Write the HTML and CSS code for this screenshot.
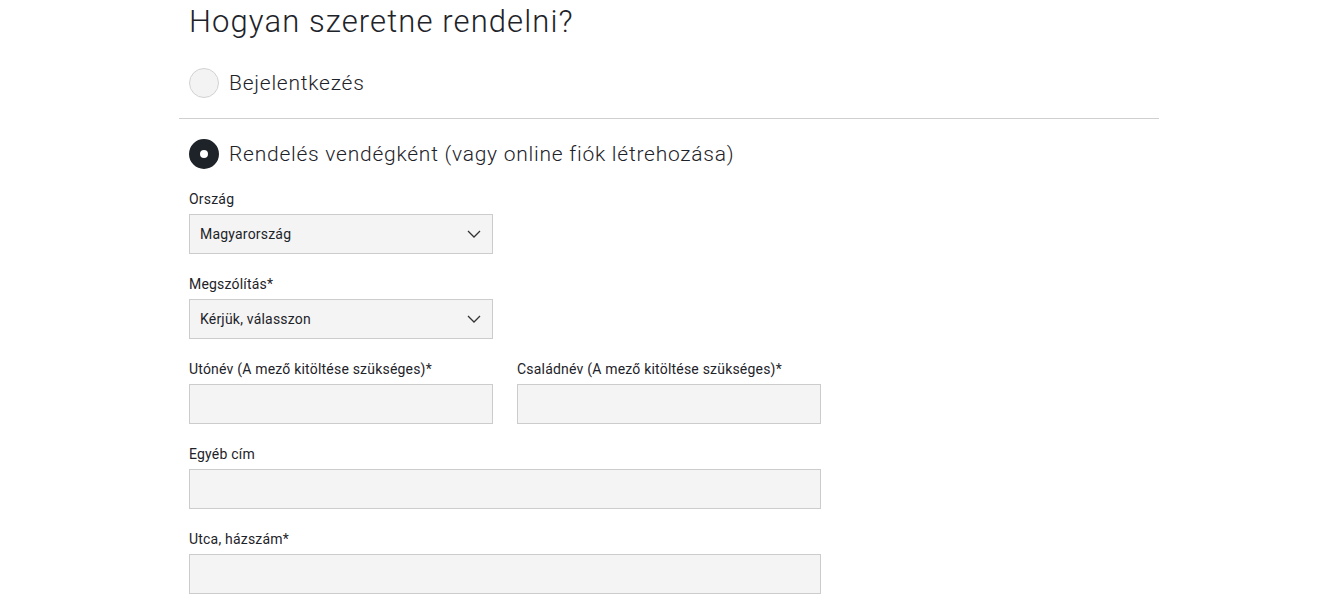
FILE: index.html
```html
<!DOCTYPE html>
<html lang="hu">
<head>
  <meta charset="UTF-8">
  <title>Hogyan szeretne rendelni?</title>
  <link rel="stylesheet" href="styles.css">
</head>

<body>

  <div class="checkout">
    <h1>Hogyan szeretne rendelni?</h1>

    <div class="option">
      <label class="choice"><span class="radio"></span> Bejelentkezés</label>
    </div>

    <div class="option active">
      <label class="choice"><span class="radio checked"></span> Rendelés vendégként (vagy online fiók létrehozása)</label>

      <form class="guest-form">
        <div class="field">
          <label>Ország</label>
          <div class="select">
            <span>Magyarország</span>
            <svg width="14" height="8" viewBox="0 0 14 8"><path d="M1 1l6 6 6-6" fill="none" stroke="#333" stroke-width="1.3"/></svg>
          </div>
        </div>

        <div class="field">
          <label>Megszólítás*</label>
          <div class="select">
            <span>Kérjük, válasszon</span>
            <svg width="14" height="8" viewBox="0 0 14 8"><path d="M1 1l6 6 6-6" fill="none" stroke="#333" stroke-width="1.3"/></svg>
          </div>
        </div>

        <div class="row">
          <div class="field">
            <label>Utónév (A mező kitöltése szükséges)*</label>
            <input type="text">
          </div>
          <div class="field">
            <label>Családnév (A mező kitöltése szükséges)*</label>
            <input type="text">
          </div>
        </div>

        <div class="field wide">
          <label>Egyéb cím</label>
          <input type="text">
        </div>

        <div class="field wide">
          <label>Utca, házszám*</label>
          <input type="text">
        </div>
      </form>
    </div>
  </div>

</body>
</html>
```

FILE: styles.css
```css
* {
  margin: 0;
  padding: 0;
  box-sizing: border-box;
}

body {
  font-family: Roboto, 'Liberation Sans', sans-serif;
  color: #1d2329;
  background: #fff;
}

.checkout {
  width: 980px;
  margin-left: 179px;
}

h1 {
  font-weight: 300;
  font-size: 31px;
  line-height: 44px;
  padding: 0 10px;
  letter-spacing: 1.1px;
}

.option {
  padding: 0 10px;
}

.option:first-of-type {
  padding-top: 24px;
  padding-bottom: 20px;
  border-bottom: 1px solid #cfcfcf;
}

.active {
  padding-top: 20px;
}

.choice {
  display: flex;
  align-items: center;
  gap: 10px;
  font-size: 21px;
  font-weight: 300;
  letter-spacing: 0.75px;
  height: 30px;
  cursor: pointer;
}

.radio {
  width: 30px;
  height: 30px;
  border-radius: 50%;
  background: #f3f3f3;
  border: 1px solid #d2d2d2;
  flex-shrink: 0;
}

.radio.checked {
  background: #fff;
  border: 11px solid #1d2329;
}

.guest-form {
  padding-top: 20px;
  width: 632px;
}

.field {
  margin-bottom: 20px;
}

.field label {
  display: block;
  font-size: 14px;
  line-height: 20px;
  letter-spacing: 0.2px;
  margin-bottom: 5px;
}

.select,
.field input {
  width: 304px;
  height: 40px;
  background: #f4f4f4;
  border: 1px solid #cccccc;
  font-family: inherit;
  font-size: 14px;
  letter-spacing: 0.2px;
  color: #1d2329;
}

.select {
  display: flex;
  align-items: center;
  justify-content: space-between;
  padding: 0 11px 0 10px;
}

.row {
  display: flex;
  gap: 24px;
}

.wide input {
  width: 632px;
}
```
